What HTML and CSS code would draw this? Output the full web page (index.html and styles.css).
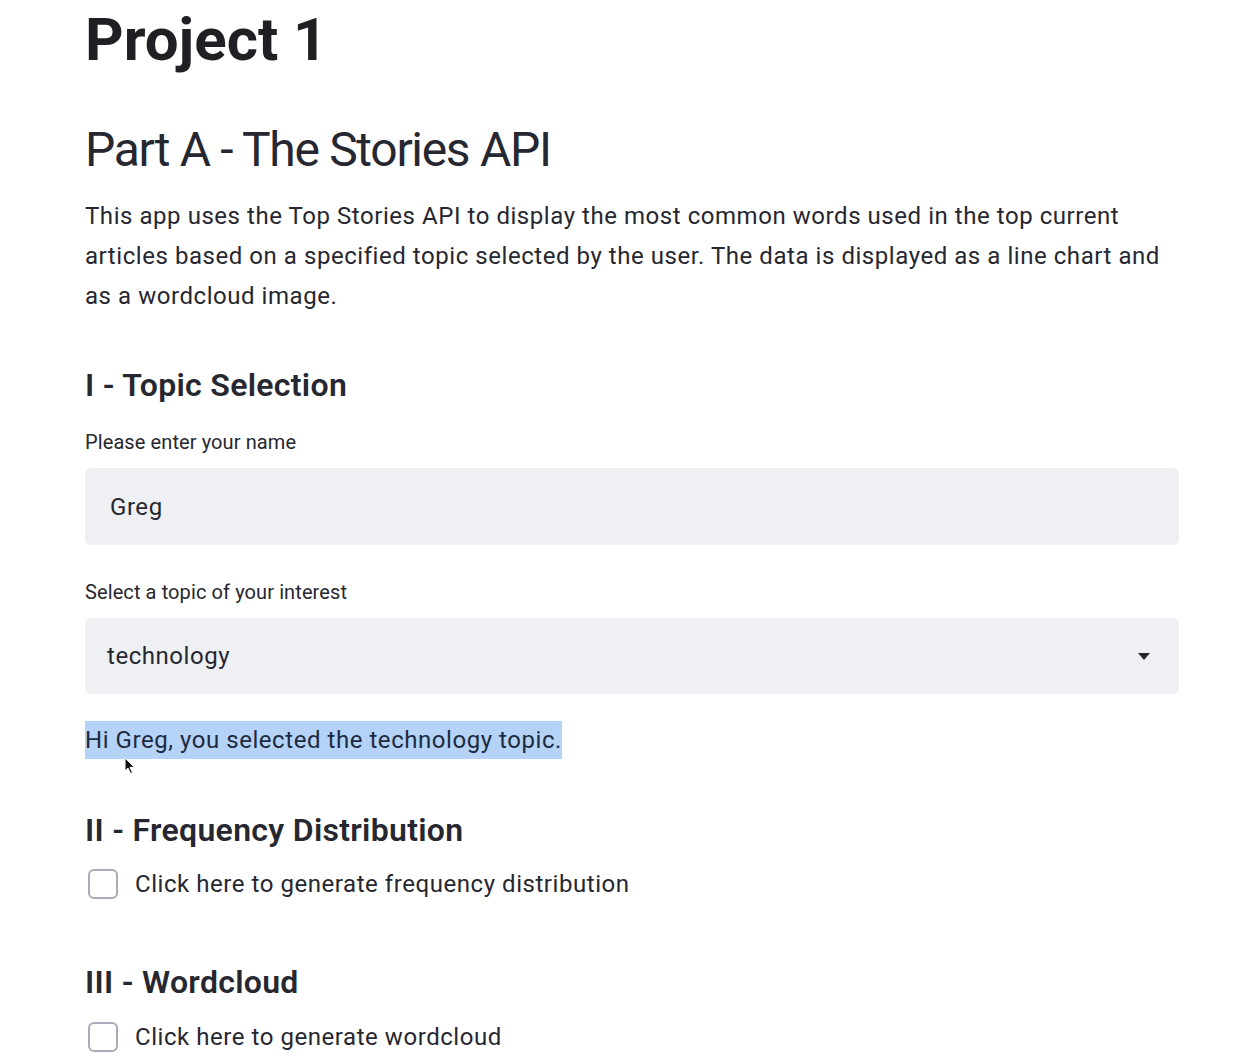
FILE: index.html
```html
<!DOCTYPE html>
<html lang="en">
<head>
<meta charset="utf-8">
<title>Project 1</title>
<link rel="stylesheet" href="styles.css">
</head>
<body>
<main class="app">
  <h1 class="title">Project 1</h1>
  <h2 class="header">Part A - The Stories API</h2>
  <p class="intro">This app uses the Top Stories API to display the most common words used in the top current articles based on a specified topic selected by the user. The data is displayed as a line chart and as a wordcloud image.</p>

  <h3 class="sub sub-first">I - Topic Selection</h3>
  <label class="field-label label-first">Please enter your name</label>
  <div class="input-box"><span class="input-text">Greg</span></div>

  <label class="field-label label-second">Select a topic of your interest</label>
  <div class="select-box">
    <span class="select-text">technology</span>
    <svg class="caret" width="12" height="7" viewBox="0 0 12 7"><path d="M0 0 H12 L6 7 Z" fill="#262730"/></svg>
  </div>

  <div class="message">
    <span class="selected">Hi Greg, you selected the technology topic.</span>
    <svg class="pointer" width="12" height="18" viewBox="0 0 12 18"><path d="M1 1 L1 14 L4 11 L6.5 16.5 L8.5 15.6 L6 10.3 L10.5 10.3 Z" fill="#111" stroke="#fff" stroke-width="1"/></svg>
  </div>

  <h3 class="sub sub-second">II - Frequency Distribution</h3>
  <div class="check-row row-first"><span class="box"></span><span class="check-label">Click here to generate frequency distribution</span></div>

  <h3 class="sub sub-third">III - Wordcloud</h3>
  <div class="check-row row-second"><span class="box"></span><span class="check-label">Click here to generate wordcloud</span></div>
</main>
</body>
</html>
```
FILE: styles.css
```css
* { box-sizing: border-box; }
html, body { margin: 0; padding: 0; background: #ffffff; }
body {
  font-family: Roboto, "Noto Sans", "Liberation Sans", sans-serif;
  color: #262730;
  overflow: hidden;
}
.app {
  width: 1094px;
  margin-left: 85px;
  display: flex;
  flex-direction: column;
  align-items: flex-start;
  letter-spacing: 0.55px;
}
.title {
  margin: 0;
  font-size: 60px;
  font-weight: 700;
  line-height: 80px;
  height: 80px;
  letter-spacing: 0;
  color: #1f1f24;
}
.header {
  margin: 40px 0 0;
  font-size: 48px;
  font-weight: 400;
  line-height: 60px;
  height: 60px;
  letter-spacing: -1.3px;
}
.intro {
  margin: 16px 0 0;
  font-size: 24px;
  line-height: 40px;
}
.sub {
  margin: 0;
  font-size: 32px;
  font-weight: 600;
  line-height: 44px;
  height: 44px;
  letter-spacing: 0.3px;
}
.sub-first { margin-top: 47px; }
.sub-second { margin-top: 49px; }
.sub-third { margin-top: 61px; }
.field-label {
  display: block;
  font-size: 20px;
  line-height: 28px;
  height: 28px;
  letter-spacing: 0.1px;
}
.label-first { margin-top: 21px; }
.label-second { margin-top: 33px; }
.input-box, .select-box {
  width: 100%;
  margin-top: 12px;
  background: #eef0f4;
  border-radius: 6px;
  display: flex;
  align-items: center;
  font-size: 24px;
}
.input-box { height: 77px; padding-left: 25px; }
.select-box { height: 76px; padding: 0 29px 0 22px; justify-content: space-between; }
.caret { display: block; }
.message {
  position: relative;
  margin-top: 27px;
  height: 38px;
  font-size: 24px;
  line-height: 38px;
}
.selected {
  background: #b5d3f7;
  display: inline-block;
  color: #1d2a40;
}
.pointer {
  position: absolute;
  left: 39px;
  top: 36px;
}
.check-row {
  display: flex;
  align-items: center;
  height: 30px;
  font-size: 24px;
}
.row-first { margin-top: 17px; }
.row-second { margin-top: 18px; }
.box {
  width: 30px;
  height: 30px;
  margin-left: 3px;
  border: 2px solid #a9abb8;
  border-radius: 6px;
  background: #fff;
  flex: none;
}
.check-label { margin-left: 17px; }
```
